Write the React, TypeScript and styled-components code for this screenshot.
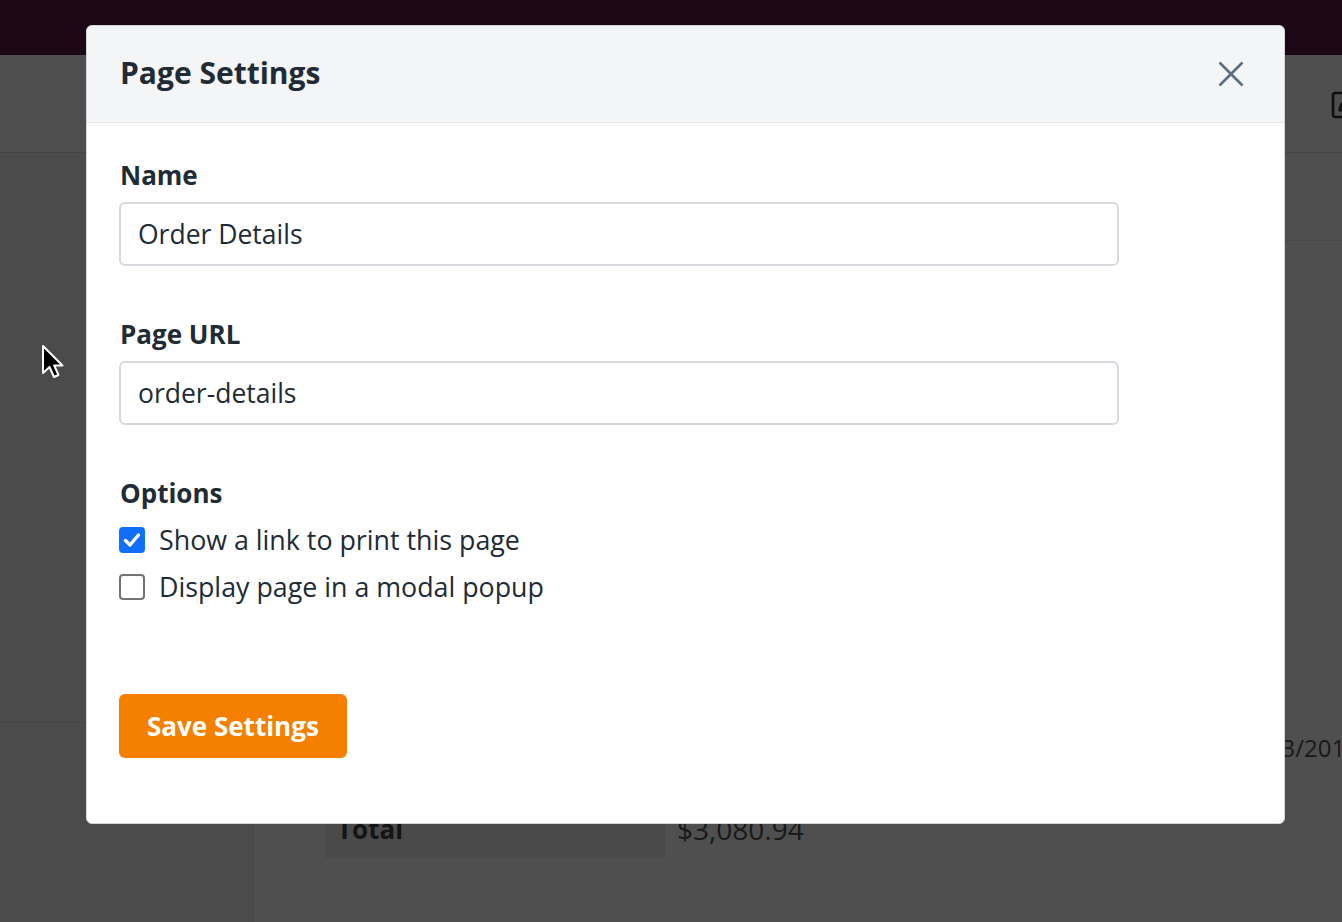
import { useState } from "react";
import styled, { createGlobalStyle } from "styled-components";
import { SquarePen } from "lucide-react";

const GlobalStyle = createGlobalStyle`
  * {
    box-sizing: border-box;
  }
  body {
    margin: 0;
    font-family: "Open Sans", "Noto Sans", Arial, sans-serif;
    color: #212b36;
  }
`;

const Page = styled.div`
  position: relative;
  height: 100vh;
  display: flex;
  flex-direction: column;
  overflow: hidden;
  background: #ffffff;
`;

const TopNav = styled.div`
  height: 55px;
  flex-shrink: 0;
  background: #5a1747;
`;

const Toolbar = styled.div`
  height: 98px;
  flex-shrink: 0;
  display: flex;
  align-items: center;
  justify-content: flex-end;
  background: #fafafa;
  border-bottom: 1px solid #dcdcdc;
  color: #333;
`;

const ToolIcon = styled.div`
  width: 32px;
  margin-right: -19px;
  margin-top: 2px;
  display: flex;
`;

const Body = styled.div`
  flex: 1;
  display: flex;
  min-height: 0;
`;

const Sidebar = styled.aside`
  width: 254px;
  flex-shrink: 0;
  display: flex;
  flex-direction: column;
  background: #f0f0f0;
  border-right: 1px solid #e0e0e0;
`;

const SidebarSection = styled.div`
  height: 570px;
  border-bottom: 1px solid #dcdcdc;
`;

const Main = styled.main`
  flex: 1;
  display: flex;
  flex-direction: column;
  overflow: hidden;
`;

const SubHeader = styled.div`
  height: 88px;
  flex-shrink: 0;
  border-bottom: 1px solid #e2e2e2;
`;

const Content = styled.div`
  flex: 1;
  width: 1150px;
  display: flex;
  flex-direction: column;
  justify-content: flex-end;
  padding: 0 0 64px 71px;
  font-size: 26px;
  color: #555;
`;

const MetaRow = styled.div`
  display: flex;
  justify-content: flex-end;
  padding-right: 45px;
  font-size: 24px;
  line-height: 36px;
  margin-bottom: 34px;
  white-space: nowrap;
`;

const SummaryRow = styled.div`
  display: grid;
  grid-template-columns: 340px 1fr;
  column-gap: 12px;
  height: 58px;
  align-items: center;
`;

const SummaryLabel = styled.div`
  height: 100%;
  display: flex;
  align-items: center;
  padding-left: 12px;
  background: #efefef;
  font-weight: 700;
  color: #444;
`;

const SummaryValue = styled.span`
  font-size: 28px;
`;

const Overlay = styled.div`
  position: absolute;
  inset: 0;
  background: rgba(0, 0, 0, 0.69);
  padding: 25px 0 0 86px;
`;

const Cursor = styled.svg`
  position: absolute;
  left: 41px;
  top: 344px;
`;

const Modal = styled.div`
  width: 1199px;
  background: #ffffff;
  border: 1px solid #d3d7dc;
  border-radius: 6px;
  overflow: hidden;
`;

const ModalHeader = styled.div`
  height: 97px;
  display: flex;
  align-items: center;
  justify-content: space-between;
  padding: 0 40px 3px 33px;
  background: #f4f5f7;
  border-bottom: 1px solid #e3e6ea;
`;

const Title = styled.h2`
  margin: 0;
  font-size: 30px;
  font-weight: 700;
  color: #212b36;
`;

const CloseButton = styled.button`
  border: 0;
  padding: 0;
  margin-top: 3px;
  background: none;
  display: flex;
  cursor: pointer;
  color: #5a6d81;
`;

const ModalBody = styled.div`
  padding: 36px 32px 65px;
`;

const Field = styled.div<{ $last?: boolean }>`
  display: flex;
  flex-direction: column;
  margin-bottom: ${(p) => (p.$last ? "0" : "52px")};
`;

const Label = styled.label<{ $gap: number }>`
  font-size: 26px;
  line-height: 32px;
  font-weight: 700;
  padding-left: 1px;
  margin-bottom: ${(p) => p.$gap}px;
  color: #212b36;
`;

const TextInput = styled.input`
  width: 1000px;
  height: 64px;
  padding: 0 17px;
  border: 2px solid #d6dadf;
  border-radius: 6px;
  font-family: inherit;
  font-size: 26.5px;
  color: #212b36;
  outline: none;
`;

const OptionRow = styled.label`
  display: flex;
  align-items: center;
  gap: 14px;
  height: 47px;
  font-size: 26.8px;
  color: #212b36;
  cursor: pointer;
`;

const Box = styled.span<{ $checked: boolean }>`
  width: 26px;
  height: 26px;
  flex-shrink: 0;
  display: flex;
  align-items: center;
  justify-content: center;
  border-radius: 4px;
  border: 2px solid ${(p) => (p.$checked ? "#0f6ffa" : "#737373")};
  background: ${(p) => (p.$checked ? "#0f6ffa" : "#ffffff")};
`;

const SaveButton = styled.button`
  margin-top: 84px;
  height: 64px;
  padding: 0 28px;
  border: 0;
  border-radius: 6px;
  background: #f58000;
  color: #ffffff;
  font-family: inherit;
  font-size: 26px;
  font-weight: 700;
  cursor: pointer;
`;

const Checkbox = ({
  checked,
  label,
  onToggle,
}: {
  checked: boolean;
  label: string;
  onToggle: () => void;
}) => (
  <OptionRow onClick={onToggle}>
    <Box $checked={checked}>
      {checked && (
        <svg width="20" height="20" viewBox="0 0 20 20">
          <path
            d="M3.5 10.5 L8 15 L16.5 5"
            fill="none"
            stroke="#ffffff"
            strokeWidth="3.4"
            strokeLinecap="round"
            strokeLinejoin="round"
          />
        </svg>
      )}
    </Box>
    {label}
  </OptionRow>
);

const App = () => {
  const [name, setName] = useState("Order Details");
  const [url, setUrl] = useState("order-details");
  const [printLink, setPrintLink] = useState(true);
  const [popup, setPopup] = useState(false);

  return (
    <>
      <GlobalStyle />
      <Page>
        <TopNav />
        <Toolbar>
          <ToolIcon>
            <SquarePen size={32} strokeWidth={2} />
          </ToolIcon>
        </Toolbar>
        <Body>
          <Sidebar>
            <SidebarSection />
          </Sidebar>
          <Main>
            <SubHeader />
            <Content>
              <MetaRow>10/03/2019</MetaRow>
              <SummaryRow>
                <SummaryLabel>Total</SummaryLabel>
                <SummaryValue>$3,080.94</SummaryValue>
              </SummaryRow>
            </Content>
          </Main>
        </Body>

        <Overlay>
          <Modal>
            <ModalHeader>
              <Title>Page Settings</Title>
              <CloseButton aria-label="Close">
                <svg width="26" height="26" viewBox="0 0 26 26">
                  <path
                    d="M1.5 1.5 L24.5 24.5 M24.5 1.5 L1.5 24.5"
                    stroke="currentColor"
                    strokeWidth="2.6"
                  />
                </svg>
              </CloseButton>
            </ModalHeader>
            <ModalBody>
              <Field>
                <Label $gap={11}>Name</Label>
                <TextInput value={name} onChange={(e) => setName(e.target.value)} />
              </Field>
              <Field>
                <Label $gap={11}>Page URL</Label>
                <TextInput value={url} onChange={(e) => setUrl(e.target.value)} />
              </Field>
              <Field $last>
                <Label $gap={7}>Options</Label>
                <Checkbox
                  checked={printLink}
                  label="Show a link to print this page"
                  onToggle={() => setPrintLink((v) => !v)}
                />
                <Checkbox
                  checked={popup}
                  label="Display page in a modal popup"
                  onToggle={() => setPopup((v) => !v)}
                />
              </Field>
              <SaveButton>Save Settings</SaveButton>
            </ModalBody>
          </Modal>
          <Cursor width="26" height="38" viewBox="0 0 26 38">
            <path
              d="M2 2 V29 L8.5 23 L13 33 L17.5 31 L13.2 21.5 H21.5 Z"
              fill="#000000"
              stroke="#ffffff"
              strokeWidth="2"
              strokeLinejoin="round"
            />
          </Cursor>
        </Overlay>
      </Page>
    </>
  );
};

export default App;
